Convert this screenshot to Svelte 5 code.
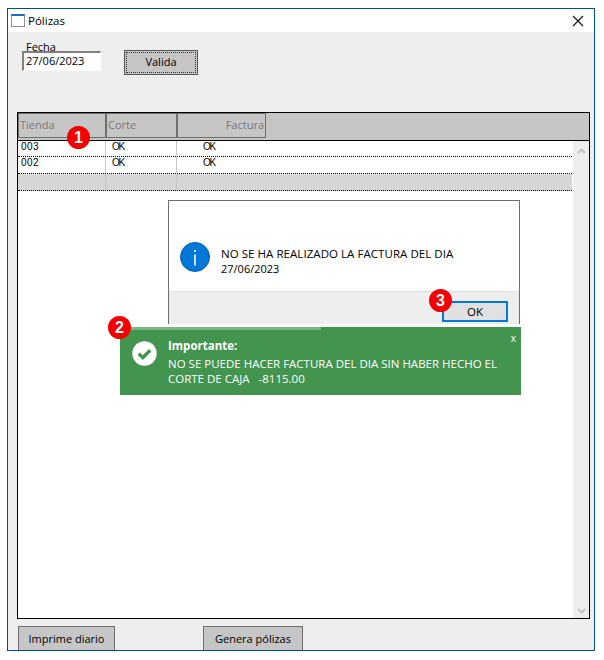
<script>
  const columns = [
    { label: 'Tienda', cls: 'tienda' },
    { label: 'Corte', cls: 'corte' },
    { label: 'Factura', cls: 'factura' }
  ];

  const rows = [
    { tienda: '003', corte: 'OK', factura: 'OK' },
    { tienda: '002', corte: 'OK', factura: 'OK' },
    { tienda: '', corte: '', factura: '', empty: true }
  ];
</script>

<div class="page">
  <div class="window">
    <!-- Title bar -->
    <header class="titlebar">
      <span class="app-icon"></span>
      <span class="title">Pólizas</span>
      <svg class="close" width="12" height="12" viewBox="0 0 12 12" aria-hidden="true">
        <path d="M1 1 L11 11 M11 1 L1 11" stroke="#111" stroke-width="1.1" fill="none" />
      </svg>
    </header>

    <main class="body">
      <section class="filters">
        <div class="field">
          <span class="field-label">Fecha</span>
          <div class="date-input">27/06/2023</div>
        </div>
        <button class="btn valida"><span>Valida</span></button>
      </section>

      <!-- Grid -->
      <section class="grid">
        <div class="grid-head">
          {#each columns as col}
            <div class="head-cell {col.cls}">{col.label}</div>
          {/each}
        </div>
        <div class="grid-body">
          <div class="rows">
            {#each rows as row}
              <div class="row" class:empty={row.empty}>
                <div class="cell tienda">{row.tienda}</div>
                <div class="cell corte">{row.corte}</div>
                <div class="cell factura">{row.factura}</div>
              </div>
            {/each}
          </div>
          <div class="scrollbar">
            <svg width="9" height="6" viewBox="0 0 9 6" aria-hidden="true">
              <path d="M1 5 L4.5 1.5 L8 5" stroke="#c4c4c4" stroke-width="2" fill="none" />
            </svg>
            <svg width="9" height="6" viewBox="0 0 9 6" aria-hidden="true">
              <path d="M1 1 L4.5 4.5 L8 1" stroke="#c4c4c4" stroke-width="2" fill="none" />
            </svg>
          </div>
        </div>
      </section>

      <footer class="actions">
        <button class="btn action imprime">Imprime diario</button>
        <button class="btn action genera">Genera pólizas</button>
      </footer>
    </main>

    <!-- Message box -->
    <div class="dialog">
      <div class="dialog-content">
        <svg class="info" width="30" height="30" viewBox="0 0 30 30" aria-hidden="true">
          <circle cx="15" cy="15" r="14.5" fill="#0078d7" stroke="#0a5ea8" stroke-width="1" />
          <rect x="14.2" y="12.5" width="1.6" height="11" fill="#fff" />
          <rect x="14.2" y="8" width="1.6" height="2" fill="#fff" />
        </svg>
        <p>NO SE HA REALIZADO LA FACTURA DEL DIA<br /><span class="msg-date">27/06/2023</span></p>
      </div>
      <div class="dialog-footer">
        <button class="ok">OK</button>
      </div>
    </div>

    <!-- Toast -->
    <div class="toast">
      <div class="progress"></div>
      <svg class="check" width="25" height="25" viewBox="0 0 25 25" aria-hidden="true">
        <circle cx="12.5" cy="12.5" r="12.2" fill="#fff" />
        <path d="M6.8 12.6 L10.8 16.6 L18.2 9.2" stroke="#43944f" stroke-width="3.4" fill="none" />
      </svg>
      <div class="toast-text">
        <strong>Importante:</strong>
        <p>NO SE PUEDE HACER FACTURA DEL DIA SIN HABER HECHO EL<br />CORTE DE CAJA &nbsp;&nbsp;-8115.00</p>
      </div>
      <span class="toast-close">x</span>
    </div>

    <!-- Numbered callouts -->
    <span class="badge one">1</span>
    <span class="badge two">2</span>
    <span class="badge three">3</span>
  </div>
</div>

<style>
  :global(body) {
    margin: 0;
    background: #fff;
  }

  .page {
    width: 604px;
    height: 660px;
    padding: 8px 9px 9px 7px;
    box-sizing: border-box;
    font-family: "Open Sans", "Noto Sans", sans-serif;
    color: #000;
  }

  .window {
    position: relative;
    height: 100%;
    box-sizing: border-box;
    border: 1px solid #00508f;
    display: flex;
    flex-direction: column;
    background: #eee;
  }

  .titlebar {
    height: 23px;
    flex: none;
    background: #fff;
    display: flex;
    align-items: center;
    padding: 0 10px 0 3px;
    font-size: 11.5px;
  }

  .app-icon {
    width: 12px;
    height: 10px;
    border: 1px solid #8a8f98;
    border-top: 2px solid #1f6fc0;
    background: #fff;
    margin-right: 3px;
  }

  .title { flex: 1; }

  .body {
    flex: 1;
    min-height: 0;
    display: flex;
    flex-direction: column;
    padding: 0 4px 0 9px;
  }

  .filters {
    height: 80px;
    flex: none;
    display: flex;
    align-items: flex-start;
    gap: 23px;
    padding: 9px 0 0 5px;
    box-sizing: border-box;
  }

  .field {
    position: relative;
    padding-top: 10px;
  }

  .field-label {
    position: absolute;
    top: 0;
    left: 4px;
    font-size: 11px;
    line-height: 12px;
  }

  .date-input {
    width: 79px;
    height: 20px;
    box-sizing: border-box;
    background: #fff;
    border-style: solid;
    border-width: 2px 1px 1px 2px;
    border-color: #808080 #fff #fff #808080;
    font-size: 11px;
    line-height: 16px;
    padding-left: 2px;
  }

  .btn {
    background: #c6c6c6;
    border: 1px solid #6e6e6e;
    font: inherit;
    font-size: 11px;
    color: #000;
    padding: 0;
  }

  .valida {
    width: 74px;
    height: 25px;
    margin-top: 9px;
    border-color: #555;
    padding: 1px;
  }

  .valida span {
    display: block;
    height: 100%;
    line-height: 17px;
    box-sizing: border-box;
    border: 1px dotted #333;
  }

  .grid {
    height: 507px;
    flex: none;
    width: 573px;
    box-sizing: border-box;
    border: 1px solid #000;
    background: #fff;
    display: flex;
    flex-direction: column;
  }

  .grid-head {
    height: 28px;
    flex: none;
    box-sizing: border-box;
    display: flex;
    align-items: flex-start;
    background: #c6c6c6;
    border-bottom: 1px solid #000;
  }

  .head-cell {
    height: 25px;
    box-sizing: border-box;
    border: 1px solid #6e6e6e;
    color: #777;
    font-size: 11px;
    line-height: 21px;
    padding: 0 1px 0 1px;
  }

  .head-cell.tienda { width: 88px; }
  .head-cell.corte { width: 71px; }
  .head-cell.factura { width: 89px; text-align: right; }

  .grid-body {
    flex: 1;
    min-height: 0;
    display: flex;
  }

  .rows { flex: 1; }

  .row {
    display: flex;
    height: 16px;
    box-sizing: border-box;
    border-bottom: 1px dotted #000;
    margin-right: 1px;
  }

  .row:nth-child(2) { height: 17px; }

  .row.empty {
    height: 17px;
    background: #d6d6d6;
  }

  .cell {
    box-sizing: border-box;
    font-family: "Liberation Sans", sans-serif;
    font-size: 10px;
    line-height: 12px;
    color: #000;
    border-right: 1px solid #c6c6c6;
    height: 100%;
  }

  .cell.tienda { width: 88px; padding-left: 3px; letter-spacing: 0.5px; }
  .cell.corte { width: 71px; padding-left: 6px; letter-spacing: -1.2px; }
  .cell.factura { flex: 1; padding-left: 26px; border-right: 0; letter-spacing: -1.2px; }

  .scrollbar {
    width: 16px;
    flex: none;
    background: #eee;
    display: flex;
    flex-direction: column;
    justify-content: space-between;
    align-items: center;
    padding: 7px 0 4px;
    box-sizing: border-box;
  }

  .scrollbar svg { display: block; }

  .actions {
    flex: 1;
    display: flex;
    align-items: flex-end;
    gap: 88px;
    padding-left: 1px;
  }

  .action {
    height: 24px;
    border-bottom: 0;
  }

  .imprime { width: 97px; }
  .genera { width: 100px; }

  /* overlays */
  .dialog {
    position: absolute;
    left: 160px;
    top: 191px;
    width: 352px;
    height: 125px;
    box-sizing: border-box;
    border: 1px solid #6e6e6e;
    border-bottom: 0;
    background: #fff;
    display: flex;
    flex-direction: column;
    font-size: 11.5px;
  }

  .dialog-content {
    height: 90px;
    flex: none;
    display: flex;
    align-items: flex-start;
    gap: 11px;
    padding: 41px 0 0 11px;
    box-sizing: border-box;
  }

  .dialog-content p {
    margin: 4px 0 0;
    line-height: 15px;
    color: #000;
    letter-spacing: 0.05px;
  }

  .msg-date { font-size: 11px; letter-spacing: 0; }

  .dialog-footer {
    flex: 1;
    background: #eee;
    border-top: 1px solid #dfdfdf;
    display: flex;
    justify-content: flex-end;
    align-items: flex-start;
    padding: 9px 11px 0 0;
  }

  .ok {
    width: 66px;
    height: 21px;
    box-sizing: border-box;
    border: 2px solid #0078d7;
    background: #e1e1e1;
    font: inherit;
    line-height: 15px;
    color: #000;
    padding: 0;
  }

  .toast {
    position: absolute;
    left: 112px;
    top: 318px;
    width: 401px;
    height: 68px;
    background: #43944f;
    color: #fff;
    display: flex;
    box-shadow: 0 -3px 0 #fff;
  }

  .progress {
    position: absolute;
    left: 0;
    top: 0;
    width: 201px;
    height: 3px;
    background: #7bb584;
  }

  .check {
    flex: none;
    margin: 14px 0 0 12px;
  }

  .toast-text {
    padding: 11px 0 0 11px;
    font-size: 11.5px;
    line-height: 15px;
  }

  .toast-text strong { font-weight: 700; }

  .toast-text p {
    margin: 3px 0 0;
    line-height: 15px;
  }

  .toast-close {
    position: absolute;
    right: 5px;
    top: 5px;
    font-size: 10px;
    line-height: 12px;
  }

  .badge {
    position: absolute;
    width: 23px;
    height: 23px;
    border-radius: 50%;
    background: #f40000;
    color: #fff;
    font-family: "Liberation Sans", sans-serif;
    font-weight: 700;
    font-size: 16px;
    line-height: 23px;
    text-align: center;
  }

  .one { left: 59px; top: 117px; }
  .two { left: 100px; top: 307px; }
  .three { left: 421px; top: 280px; }
</style>
